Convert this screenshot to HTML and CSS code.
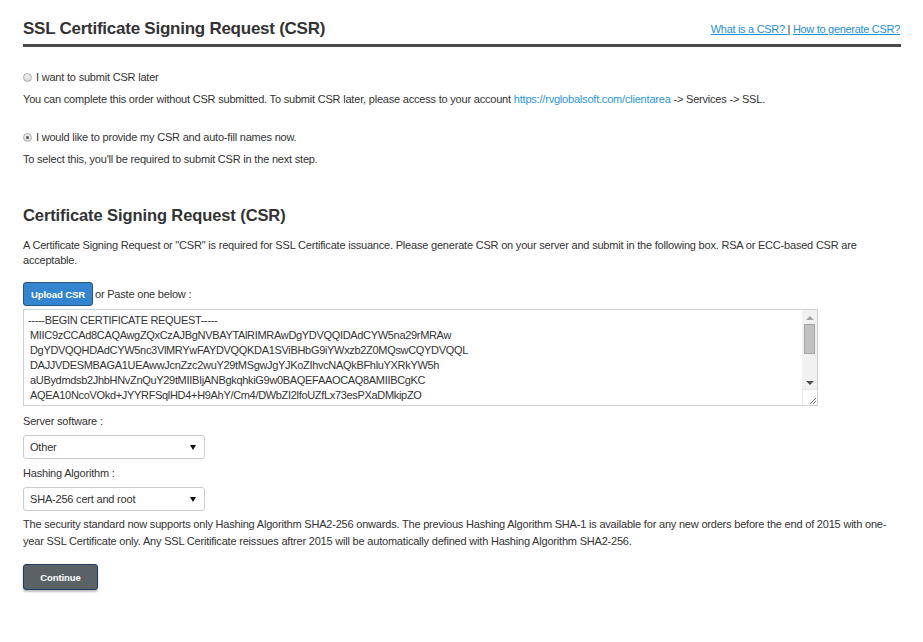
FILE: index.html
```html
<!DOCTYPE html>
<html>
<head>
<meta charset="utf-8">
<link rel="stylesheet" href="styles.css">
</head>
<body>
<div class="page">
  <div class="header">
    <h1 class="title">SSL Certificate Signing Request (CSR)</h1>
    <div class="help-links"><a href="#">What is a CSR? </a> | <a href="#">How to generate CSR?</a></div>
  </div>

  <div class="option first">
    <span class="radio"></span><span>I want to submit CSR later</span>
  </div>
  <p class="note">You can complete this order without CSR submitted. To submit CSR later, please access to your account <a class="plain-link" href="#">https://rvglobalsoft.com/clientarea</a> -&gt; Services -&gt; SSL.</p>

  <div class="option second">
    <span class="radio checked"></span><span>I would like to provide my CSR and auto-fill names now.</span>
  </div>
  <p class="note">To select this, you'll be required to submit CSR in the next step.</p>

  <h2 class="subtitle">Certificate Signing Request (CSR)</h2>
  <p class="intro">A Certificate Signing Request or "CSR" is required for SSL Certificate issuance. Please generate CSR on your server and submit in the following box. RSA or ECC-based CSR are acceptable.</p>

  <div class="upload-row">
    <button class="btn-upload">Upload CSR</button>
    <span class="paste">or Paste one below :</span>
  </div>

  <div class="csr-box">
    <div class="csr-text">
      <div class="csr-line">-----BEGIN CERTIFICATE REQUEST-----</div>
      <div class="csr-line indent">MIIC9zCCAd8CAQAwgZQxCzAJBgNVBAYTAlRIMRAwDgYDVQQIDAdCYW5na29rMRAw</div>
      <div class="csr-line indent">DgYDVQQHDAdCYW5nc3VlMRYwFAYDVQQKDA1SViBHbG9iYWxzb2Z0MQswCQYDVQQL</div>
      <div class="csr-line indent">DAJJVDESMBAGA1UEAwwJcnZzc2wuY29tMSgwJgYJKoZIhvcNAQkBFhluYXRkYW5h</div>
      <div class="csr-line indent">aUBydmdsb2JhbHNvZnQuY29tMIIBIjANBgkqhkiG9w0BAQEFAAOCAQ8AMIIBCgKC</div>
      <div class="csr-line indent">AQEA10NcoVOkd+JYYRFSqlHD4+H9AhY/Cm4/DWbZI2lfoUZfLx73esPXaDMkipZO</div>
    </div>
    <div class="scrollbar">
      <div class="sb-track">
        <span class="sb-up"></span>
        <span class="sb-thumb"></span>
        <span class="sb-fill"></span>
        <span class="sb-down"></span>
      </div>
      <div class="sb-corner">
        <svg width="10" height="10" viewBox="0 0 10 10"><path d="M9 3 L3 9 M9 6 L6 9" stroke="#777" stroke-width="1" fill="none"/></svg>
      </div>
    </div>
  </div>

  <div class="field-label first-label">Server software :</div>
  <div class="select"><span class="select-value">Other</span><span class="caret"></span></div>

  <div class="field-label">Hashing Algorithm :</div>
  <div class="select"><span class="select-value">SHA-256 cert and root</span><span class="caret"></span></div>

  <p class="hash-note">The security standard now supports only Hashing Algorithm SHA2-256 onwards. The previous Hashing Algorithm SHA-1 is available for any new orders before the end of 2015 with one-year SSL Certificate only. Any SSL Ceritificate reissues aftrer 2015 will be automatically defined with Hashing Algorithm SHA2-256.</p>

  <button class="btn-continue">Continue</button>
</div>
</body>
</html>
```

FILE: styles.css
```css
html, body {
  margin: 0;
  padding: 0;
  background: #ffffff;
}
body {
  font-family: "Liberation Sans", Arial, sans-serif;
  font-size: 11px;
  letter-spacing: -0.2px;
  color: #333333;
}
.page {
  padding: 18px 22px 40px 23px;
}
.header {
  display: flex;
  justify-content: space-between;
  align-items: center;
  border-bottom: 3px solid #4a4a4a;
  padding-bottom: 4px;
}
.title {
  margin: 0;
  font-size: 17px;
  letter-spacing: -0.25px;
  line-height: 22px;
  font-weight: bold;
  color: #333333;
}
.help-links {
  font-size: 11px;
  letter-spacing: -0.3px;
  line-height: 15px;
  color: #333;
  padding-right: 1px;
}
.help-links a {
  color: #1e90d6;
  text-decoration: underline;
}
.option {
  display: flex;
  align-items: center;
  gap: 4px;
  line-height: 15px;
}
.option.first {
  margin-top: 23px;
}
.option.second {
  margin-top: 23px;
}
.radio {
  width: 7px;
  height: 7px;
  border: 1px solid #a9a9a9;
  border-radius: 50%;
  background: linear-gradient(#f2f2f2, #d9d9d9);
  display: inline-flex;
  align-items: center;
  justify-content: center;
}
.radio.checked::after {
  content: "";
  width: 3px;
  height: 3px;
  border-radius: 50%;
  background: #555;
}
.note {
  margin: 7px 0 0;
  line-height: 15px;
}
.plain-link {
  color: #2a97d8;
  text-decoration: none;
}
.subtitle {
  margin: 37px 0 0;
  font-size: 16.5px;
  letter-spacing: -0.1px;
  line-height: 22px;
  font-weight: bold;
  color: #333;
}
.intro {
  margin: 12px 0 0;
  line-height: 15px;
}
.upload-row {
  display: flex;
  align-items: center;
  gap: 2px;
  margin-top: 14px;
}
.btn-upload {
  height: 24px;
  width: 70px;
  padding: 0;
  font-family: "Liberation Sans", Arial, sans-serif;
  font-size: 9.5px;
  letter-spacing: -0.1px;
  font-weight: bold;
  color: #ffffff;
  background: #3485d0;
  border: 1px solid #2a5580;
  border-radius: 3px;
}
.paste {
  line-height: 15px;
}
.csr-box {
  margin-top: 3px;
  width: 793px;
  height: 95px;
  border: 1px solid #d0d0d0;
  display: flex;
  overflow: hidden;
}
.csr-text {
  flex: 1;
  padding: 3px 4px 0 4px;
  overflow: hidden;
}
.csr-line {
  line-height: 15px;
  white-space: nowrap;
  letter-spacing: -0.32px;
}
.csr-line.indent {
  padding-left: 2px;
}
.scrollbar {
  width: 15px;
  display: flex;
  flex-direction: column;
}
.sb-track {
  flex: 1;
  background: #f1f1f1;
  display: flex;
  flex-direction: column;
  align-items: center;
}
.sb-up {
  margin-top: 6px;
  width: 0;
  height: 0;
  border-left: 4px solid transparent;
  border-right: 4px solid transparent;
  border-bottom: 4px solid #a3a3a3;
}
.sb-thumb {
  margin-top: 4px;
  width: 9px;
  height: 28px;
  background: #c1c1c1;
  border: 1px solid #a8a8a8;
}
.sb-fill {
  flex: 1;
}
.sb-down {
  margin-bottom: 4px;
  width: 0;
  height: 0;
  border-left: 4px solid transparent;
  border-right: 4px solid transparent;
  border-top: 4px solid #505050;
}
.sb-corner {
  height: 15px;
  background: #ffffff;
  border-left: 1px solid #e6e6e6;
  border-top: 1px solid #e6e6e6;
  display: flex;
  align-items: flex-end;
  justify-content: flex-end;
}
.field-label {
  margin-top: 7px;
  line-height: 15px;
}
.field-label.first-label {
  margin-top: 8px;
}
.select {
  margin-top: 6px;
  height: 22px;
  border: 1px solid #cccccc;
  border-radius: 3px;
  display: flex;
  align-items: center;
  justify-content: space-between;
  padding: 0 6px 0 6px;
  width: 168px;
}
.select-value {
  line-height: 15px;
  font-size: 11px;
}
.caret {
  width: 0;
  height: 0;
  border-left: 3px solid transparent;
  border-right: 3px solid transparent;
  border-top: 5px solid #111;
  margin-right: 2px;
}
.hash-note {
  margin: 5px 0 0;
  line-height: 17px;
}
.btn-continue {
  margin-top: 14px;
  width: 75px;
  height: 26px;
  padding: 0;
  font-family: "Liberation Sans", Arial, sans-serif;
  font-size: 9.5px;
  letter-spacing: -0.1px;
  font-weight: bold;
  color: #ffffff;
  background: #5b6266;
  border: 1px solid #1f3d5c;
  border-radius: 3px;
  box-shadow: 0 2px 2px rgba(0, 0, 0, 0.25);
}
```
